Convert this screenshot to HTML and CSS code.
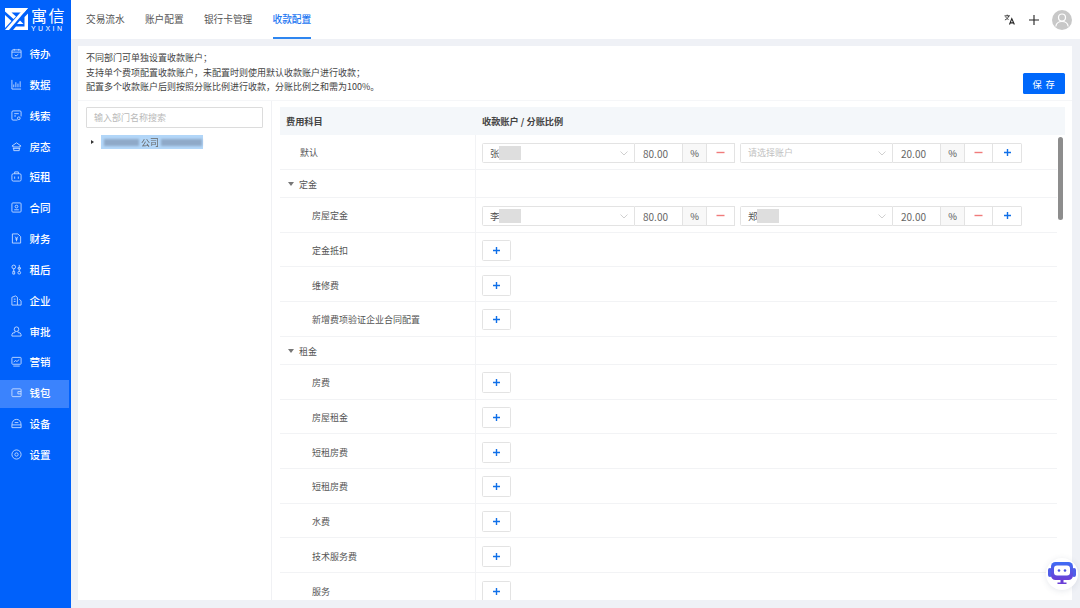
FILE: index.html
```html
<!DOCTYPE html>
<html lang="zh-CN">
<head>
<meta charset="utf-8">
<title>收款配置</title>
<link rel="stylesheet" href="styles.css">
</head>
<body>
<div class="app">
  <aside class="sidebar">
    <div class="logo">
      <svg class="logo-mark" viewBox="0 0 23 22"><path fill="#fff" d="M0 0H23L19 4.500H6.500L11 8.500 8.500 11 0 3.500Z"/><path fill="#fff" d="M23 0 4 22H0L18.500 1Z"/><path fill="#fff" d="M0 7 6.500 13 0 20Z"/><path fill="#fff" d="M8 22 11 18.500H19.500V9L23 5.500V22Z"/><path fill="#fff" d="M12 16 15 12.500 18.500 16Z"/></svg>
      <div class="logo-text"><span class="logo-cn">寓信</span><span class="logo-en">YUXIN</span></div>
    </div>
    <nav class="nav">
      <a class="nav-item"><svg class="nav-icon" viewBox="0 0 12 12"><rect x="1" y="2" width="10" height="9" rx="1.2"/><path d="M1 4.500h10M3.500 1v2M8.500 1v2M4 7.500l1.500 1.200L8 6.800"/></svg>待办</a>
      <a class="nav-item"><svg class="nav-icon" viewBox="0 0 12 12"><path d="M1 1v10h10M3 9V6M5.300 9V3.500M7.600 9V5M10 9V2.500"/></svg>数据</a>
      <a class="nav-item"><svg class="nav-icon" viewBox="0 0 12 12"><path d="M7 11H2.200A1.200 1.200 0 0 1 1 9.800V2.200A1.200 1.200 0 0 1 2.200 1h7.600A1.200 1.200 0 0 1 11 2.200V7"/><path d="M3.500 4h5M3.500 6.500h2"/><circle cx="8.500" cy="9" r="1.500"/></svg>线索</a>
      <a class="nav-item"><svg class="nav-icon" viewBox="0 0 12 12"><path d="M1 5.500 6 2l5 3.500M2 5v1.500h8V5M2 8h8M3 8v2.500h6V8"/></svg>房态</a>
      <a class="nav-item"><svg class="nav-icon" viewBox="0 0 12 12"><rect x="1" y="3" width="10" height="8" rx="1.500"/><path d="M4 3V1h4v2M4 6v2.500M8 6v2.500"/></svg>短租</a>
      <a class="nav-item"><svg class="nav-icon" viewBox="0 0 12 12"><rect x="1" y="1" width="10" height="10" rx="1"/><circle cx="6" cy="5" r="1.500"/><path d="M3.500 8.500h5"/></svg>合同</a>
      <a class="nav-item"><svg class="nav-icon" viewBox="0 0 12 12"><path d="M1.500 1h6l3 3v7h-9zM4.500 4 6 6l1.500-2M4.500 6.500h3M6 6v3"/></svg>财务</a>
      <a class="nav-item"><svg class="nav-icon" viewBox="0 0 12 12"><circle cx="3" cy="3.200" r="2"/><path d="M3 5.200V8M2 8h2v3H2zM9 1v3M7.700 4h2.600v1.500H7.700zM9 5.500V8"/><circle cx="9" cy="9.500" r="1.500"/></svg>租后</a>
      <a class="nav-item"><svg class="nav-icon" viewBox="0 0 12 12"><path d="M1 11V2.500L5 1l2 1.500V11zM3 4.500h2M3 7h2M9 4.500l2 2V11H7"/></svg>企业</a>
      <a class="nav-item"><svg class="nav-icon" viewBox="0 0 12 12"><circle cx="6" cy="3.500" r="2.500"/><path d="M4.500 5.800 4 7.500H2L1 9.500v1.500h10V9.500L10 7.500H8l-.5-1.700"/></svg>审批</a>
      <a class="nav-item"><svg class="nav-icon" viewBox="0 0 12 12"><rect x="1" y="1.500" width="10" height="7.500" rx=".8"/><path d="M3 6.500 5 5l1.500 1L9 3.800M2.500 11h7"/></svg>营销</a>
      <a class="nav-item active"><svg class="nav-icon" viewBox="0 0 12 12"><rect x="1" y="2" width="10" height="8.500" rx="1"/><path d="M11 5H7.500v2.500H11"/></svg>钱包</a>
      <a class="nav-item"><svg class="nav-icon" viewBox="0 0 12 12"><path d="M1 10.500V7.500C1 4 3 1.500 6 1.500S11 4 11 7.500v3zM1 7.500h10M3.500 9v0M6 9v0M8.500 9v0M4 5h4"/></svg>设备</a>
      <a class="nav-item"><svg class="nav-icon" viewBox="0 0 12 12"><circle cx="6" cy="6" r="5"/><circle cx="6" cy="6" r="1.800"/></svg>设置</a>
    </nav>
  </aside>

  <div class="main">
    <header class="topbar">
      <div class="tabs">
        <a class="tab">交易流水</a>
        <a class="tab">账户配置</a>
        <a class="tab">银行卡管理</a>
        <a class="tab current">收款配置</a>
      </div>
      <div class="top-actions">
        <svg class="icon-translate" viewBox="0 0 12 12"><path d="M.5 2h6M3.500.7V2M5.200 2C4.800 4 3 5.800 1 6.500M1.800 2.800C2.500 4.500 3.700 5.500 5 6"/><path class="thick" d="M6 11.500 8.500 5l2.800 6.500M6.800 9.700h3.800"/></svg>
        <svg class="icon-plus" viewBox="0 0 10 10"><path d="M5 0v10M0 5h10"/></svg>
        <div class="avatar"><svg viewBox="0 0 20 20"><circle cx="10" cy="7.500" r="3.500"/><path d="M3.800 16.500c.5-3.500 3-5 6.200-5s5.700 1.500 6.200 5"/></svg></div>
      </div>
    </header>

    <div class="content">
      <section class="panel">
        <div class="panel-head">
          <div class="notes">
            <p>不同部门可单独设置收款账户；</p>
            <p>支持单个费项配置收款账户，未配置时则使用默认收款账户进行收款；</p>
            <p>配置多个收款账户后则按照分账比例进行收款，分账比例之和需为100%。</p>
          </div>
          <button class="save">保 存</button>
        </div>
        <div class="panel-body">
          <div class="dept">
            <div class="search">输入部门名称搜索</div>
            <div class="tree-node">
              <span class="tree-caret"></span>
              <span class="tree-label"><i class="mask m1"></i><span class="tree-text">公司</span><i class="mask m2"></i></span>
            </div>
          </div>
          <div class="fees">
            <div class="fee-head"><div class="c1">费用科目</div><div class="c2">收款账户 / 分账比例</div></div>
            <div class="fee-scroll">
              <div class="rows">
                <div class="row"><div class="c1 l1">默认</div><div class="c2">
                  <div class="pair">
                    <div class="select"><span class="val">张</span><i class="hide"></i><svg class="chev" viewBox="0 0 8 5"><path d="M.5.500 4 4 7.500.500"/></svg></div>
                    <div class="num">80.00</div><div class="pct">%</div><div class="btn minus"><svg viewBox="0 0 9 9"><path d="M.5 4.500h8"/></svg></div>
                  </div>
                  <div class="pair">
                    <div class="select"><span class="ph">请选择账户</span><svg class="chev" viewBox="0 0 8 5"><path d="M.5.500 4 4 7.500.500"/></svg></div>
                    <div class="num">20.00</div><div class="pct">%</div><div class="btn minus"><svg viewBox="0 0 9 9"><path d="M.5 4.500h8"/></svg></div><div class="btn plus"><svg viewBox="0 0 9 9"><path d="M1 4.500h7M4.500 1v7"/></svg></div>
                  </div>
                </div></div>
                <div class="row group"><div class="c1 l1 g"><span class="caret"></span>定金</div><div class="c2"></div></div>
                <div class="row"><div class="c1 l2">房屋定金</div><div class="c2">
                  <div class="pair">
                    <div class="select"><span class="val">李</span><i class="hide"></i><svg class="chev" viewBox="0 0 8 5"><path d="M.5.500 4 4 7.500.500"/></svg></div>
                    <div class="num">80.00</div><div class="pct">%</div><div class="btn minus"><svg viewBox="0 0 9 9"><path d="M.5 4.500h8"/></svg></div>
                  </div>
                  <div class="pair">
                    <div class="select"><span class="val">郑</span><i class="hide"></i><svg class="chev" viewBox="0 0 8 5"><path d="M.5.500 4 4 7.500.500"/></svg></div>
                    <div class="num">20.00</div><div class="pct">%</div><div class="btn minus"><svg viewBox="0 0 9 9"><path d="M.5 4.500h8"/></svg></div><div class="btn plus"><svg viewBox="0 0 9 9"><path d="M1 4.500h7M4.500 1v7"/></svg></div>
                  </div>
                </div></div>
                <div class="row"><div class="c1 l2">定金抵扣</div><div class="c2"><div class="add"><svg viewBox="0 0 9 9"><path d="M1 4.500h7M4.500 1v7"/></svg></div></div></div>
                <div class="row"><div class="c1 l2">维修费</div><div class="c2"><div class="add"><svg viewBox="0 0 9 9"><path d="M1 4.500h7M4.500 1v7"/></svg></div></div></div>
                <div class="row"><div class="c1 l2">新增费项验证企业合同配置</div><div class="c2"><div class="add"><svg viewBox="0 0 9 9"><path d="M1 4.500h7M4.500 1v7"/></svg></div></div></div>
                <div class="row group"><div class="c1 l1 g"><span class="caret"></span>租金</div><div class="c2"></div></div>
                <div class="row"><div class="c1 l2">房费</div><div class="c2"><div class="add"><svg viewBox="0 0 9 9"><path d="M1 4.500h7M4.500 1v7"/></svg></div></div></div>
                <div class="row"><div class="c1 l2">房屋租金</div><div class="c2"><div class="add"><svg viewBox="0 0 9 9"><path d="M1 4.500h7M4.500 1v7"/></svg></div></div></div>
                <div class="row"><div class="c1 l2">短租房费</div><div class="c2"><div class="add"><svg viewBox="0 0 9 9"><path d="M1 4.500h7M4.500 1v7"/></svg></div></div></div>
                <div class="row"><div class="c1 l2">短租房费</div><div class="c2"><div class="add"><svg viewBox="0 0 9 9"><path d="M1 4.500h7M4.500 1v7"/></svg></div></div></div>
                <div class="row"><div class="c1 l2">水费</div><div class="c2"><div class="add"><svg viewBox="0 0 9 9"><path d="M1 4.500h7M4.500 1v7"/></svg></div></div></div>
                <div class="row"><div class="c1 l2">技术服务费</div><div class="c2"><div class="add"><svg viewBox="0 0 9 9"><path d="M1 4.500h7M4.500 1v7"/></svg></div></div></div>
                <div class="row"><div class="c1 l2">服务</div><div class="c2"><div class="add"><svg viewBox="0 0 9 9"><path d="M1 4.500h7M4.500 1v7"/></svg></div></div></div>
              </div>
              <div class="scrollbar"><div class="thumb"></div></div>
            </div>
          </div>
        </div>
      </section>
    </div>
  </div>
</div>
<div class="bot">
  <svg viewBox="0 0 28 24"><defs><linearGradient id="botg" x1="0" y1="0" x2="0" y2="1"><stop offset="0" stop-color="#3f6df5"/><stop offset="1" stop-color="#6a3fd6"/></linearGradient></defs><rect x="0" y="6" width="4" height="9" rx="2" fill="#4f5de8"/><rect x="24" y="6" width="4" height="9" rx="2" fill="#4f5de8"/><rect x="3" y="0" width="22" height="18" rx="4.500" fill="url(#botg)"/><rect x="6" y="3.500" width="16" height="10" rx="3" fill="#fff"/><circle cx="11" cy="8.500" r="1.300" fill="#4b55e0"/><circle cx="17" cy="8.500" r="1.300" fill="#4b55e0"/><path d="M12.500 18h3v2.500h3V22h-9v-1.500h3z" fill="#6a3fd6"/></svg>
</div>
</body>
</html>
```

FILE: styles.css
```css
* { box-sizing: border-box; }
html, body { margin: 0; height: 100%; overflow: hidden; }
body { font-family: "Noto Sans CJK SC", "Noto Sans", sans-serif; font-size: 9px; color: #4a4a4a; background: #eff1f6; }
p { margin: 0; }
.app { display: flex; height: 608px; }

.sidebar { width: 71px; flex: none; background: #0061fb; color: #fff; }
.logo { display: flex; height: 40.500px; padding: 8px 0 0 5px; gap: 3px; }
.logo-mark { width: 23px; height: 22px; }
.logo-text { display: flex; flex-direction: column; width: 38px; margin-top: -1px; }
.logo-cn { font-size: 16px; line-height: 16px; letter-spacing: 1.500px; font-weight: 400; white-space: nowrap; }
.logo-en { font-size: 7px; line-height: 7px; letter-spacing: 2.400px; font-family: "Liberation Sans", sans-serif; margin-top: 1.500px; white-space: nowrap; }
.nav { display: flex; flex-direction: column; gap: 2.850px; }
.nav-item { display: flex; align-items: center; height: 28px; padding: 0 0 2px 11px; gap: 7.500px; font-size: 10.500px; font-weight: 500; color: #fff; width: 69px; }
.nav-item.active { background: #3b83fd; }
.nav-icon { width: 11px; height: 11px; fill: none; stroke: #d6e6ff; stroke-width: .9; flex: none; }

.main { flex: 1; min-width: 0; display: flex; flex-direction: column; }
.topbar { height: 39px; flex: none; background: #fff; display: flex; justify-content: space-between; align-items: stretch; padding: 0 8px 0 15px; }
.tabs { display: flex; gap: 20.200px; font-size: 9.700px; }
.tab { display: flex; align-items: center; height: 39px; color: #555; border-bottom: 2px solid transparent; }
.tab.current { color: #1b76f2; font-weight: 500; border-bottom-color: #2e86f0; }
.top-actions { display: flex; align-items: center; gap: 14px; }
.icon-translate { width: 11px; height: 11px; fill: none; stroke: #222; stroke-width: .9; }
.icon-translate .thick { stroke-width: 1.200; }
.icon-plus { width: 10px; height: 10px; stroke: #222; stroke-width: 1.100; margin-right: -1px; }
.avatar { width: 20px; height: 20px; border-radius: 50%; background: #c8c8c8; }
.avatar svg { display: block; width: 20px; height: 20px; fill: none; stroke: #fff; stroke-width: 1.200; }

.content { flex: 1; min-height: 0; padding: 7px 8px 8px 7px; }
.panel { height: 100%; background: #fff; display: flex; flex-direction: column; }
.panel-head { height: 55px; flex: none; border-bottom: 1px solid #f5f6f8; padding: 5px 7px 0 8px; display: flex; justify-content: space-between; }
.notes { line-height: 14.500px; color: #444; }
.save { width: 42px; height: 21px; margin-top: 22px; background: #0068fb; border: 0; border-radius: 1.500px; color: #fff; font: inherit; font-size: 9.250px; letter-spacing: .8px; padding: 0; }
.panel-body { flex: 1; min-height: 0; display: flex; }

.dept { width: 194px; flex: none; border-right: 1px solid #f0f1f4; padding: 6px 8px 0 8px; }
.search { height: 21px; border: 1px solid #dcdcdc; border-radius: 1px; padding-left: 7px; line-height: 19px; color: #b9b9b9; }
.tree-node { display: flex; align-items: center; margin-top: 7px; height: 14px; }
.tree-caret { width: 0; height: 0; border-left: 3px solid #333; border-top: 2.500px solid transparent; border-bottom: 2.500px solid transparent; margin-left: 5px; margin-right: 7px; }
.tree-label { display: flex; align-items: center; width: 102px; height: 14px; background: #b2d6f8; padding-left: 3px; }
.tree-text { margin: 0 2px; color: #666; white-space: nowrap; flex: none; filter: blur(.3px); }
.mask { display: block; height: 7px; background: #8fa9c8; flex: none; filter: blur(1px); }
.m1 { width: 35px; }
.m2 { width: 41px; }

.fees { flex: 1; min-width: 0; padding: 6px 7px 0 8px; display: flex; flex-direction: column; overflow: hidden; }
.fee-head { display: flex; height: 28px; flex: none; background: #f4f7fa; font-size: 9.200px; font-weight: 700; color: #444; align-items: center; }
.fee-head .c1 { width: 196px; padding-left: 6px; }
.fee-head .c2 { padding-left: 6px; }
.fee-scroll { flex: 1; min-height: 0; display: flex; overflow: hidden; }
.rows { width: 777px; flex: none; }
.row { display: flex; height: 34.700px; border-bottom: 1px solid #f2f3f5; }
.row.group { height: 28.300px; }
.c1 { display: flex; align-items: center; }
.row .c1 { width: 196px; flex: none; border-right: 1px solid #f2f3f5; color: #555; padding-top: 2px; }
.row .c2 { flex: 1; display: flex; align-items: center; padding: 2px 0 0 6px; gap: 5px; }
.l1 { padding-left: 20px; }
.l2 { padding-left: 32px; }
.l1.g { padding-left: 8px; }
.caret { width: 0; height: 0; border-top: 4px solid #777; border-left: 3.500px solid transparent; border-right: 3.500px solid transparent; margin-right: 5px; }

.pair { display: flex; height: 20px; border-radius: 1.500px; }
.select { position: relative; width: 153px; height: 20px; border: 1px solid #e3e3e3; border-radius: 1.500px 0 0 1.500px; padding-left: 7px; display: flex; align-items: center; color: #555; }
.val { font-size: 9.500px; }
.ph { color: #c2c2c2; }
.hide { width: 22px; height: 13.500px; background: #dedede; margin-left: -1px; filter: blur(.3px); }
.chev { position: absolute; right: 6px; top: 7px; width: 8px; height: 5px; fill: none; stroke: #c4c4c4; stroke-width: .8; }
.num { width: 48px; height: 20px; border: 1px solid #e3e3e3; border-left: 0; padding-left: 8px; line-height: 19px; color: #666; font-size: 10px; }
.pct { width: 23px; height: 20px; background: #f8f8f8; border-top: 1px solid #e3e3e3; border-bottom: 1px solid #e3e3e3; text-align: center; line-height: 18px; color: #555; font-size: 9.500px; }
.btn { width: 29px; height: 20px; border: 1px solid #e3e3e3; display: flex; align-items: center; justify-content: center; }
.btn + .btn { border-left: 0; border-radius: 0 1.500px 1.500px 0; }
.btn svg, .add svg { width: 9px; height: 9px; fill: none; stroke-width: 1.400; }
.minus svg { stroke: #f07b7b; }
.plus svg, .add svg { stroke: #0f6fe8; }
.add { width: 29px; height: 21px; border: 1px solid #e3e3e3; border-radius: 1.500px; display: flex; align-items: center; justify-content: center; }

.scrollbar { flex: 1; position: relative; }
.thumb { position: absolute; left: 1px; top: 2px; width: 5px; height: 83px; background: #8d8d8d; border-radius: 3px; }

.bot { position: fixed; left: 1046px; top: 558px; width: 32px; height: 32px; border-radius: 50%; background: #fff; box-shadow: 0 1px 6px rgba(60, 70, 110, .12); display: flex; align-items: center; justify-content: center; }
.bot svg { width: 28px; height: 24px; display: block; }
```
